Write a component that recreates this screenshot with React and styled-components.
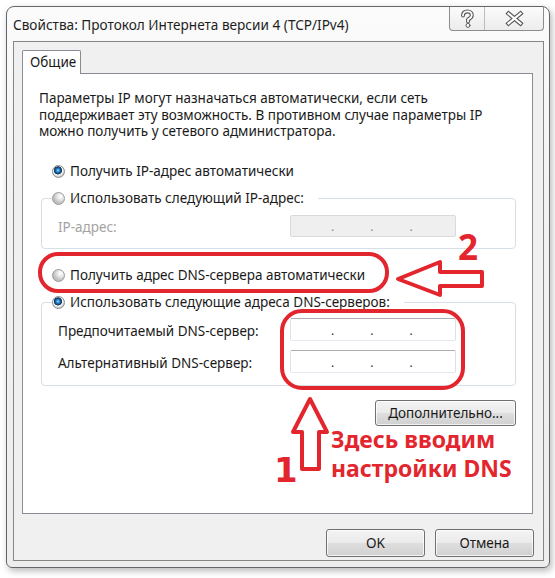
import React from "react";
import styled, { createGlobalStyle } from "styled-components";

const GlobalStyle = createGlobalStyle`
  html, body {
    margin: 0;
    padding: 0;
    background: #fff;
  }
  body {
    font-family: "Noto Sans", "DejaVu Sans", sans-serif;
    font-size: 13.5px;
    color: #1a1a1a;
    overflow: hidden;
  }
`;

const RED = "#e3262e";

const Page = styled.div`
  position: relative;
  width: 555px;
  height: 578px;
  box-sizing: border-box;
  padding: 6px 0 0 6px;
`;

const Window = styled.div`
  width: 544px;
  height: 562px;
  box-sizing: border-box;
  border: 1px solid #62666b;
  border-radius: 8px 8px 6px 6px;
  background: linear-gradient(180deg, #fbfbfb 0%, #f2f2f2 35%, #ededed 100%);
  box-shadow: 2px 3px 7px rgba(0, 0, 0, 0.28);
  display: flex;
  flex-direction: column;
`;

const TitleBar = styled.div`
  height: 34px;
  flex: none;
  display: flex;
  justify-content: space-between;
  align-items: flex-start;
  padding: 0 5px 0 6px;
`;

const Title = styled.div`
  font-size: 13.6px;
  line-height: 35px;
  color: #1e1e1e;
  white-space: nowrap;
`;

const CaptionGroup = styled.div`
  display: flex;
  height: 24px;
  box-sizing: border-box;
  border: 1px solid #8d8d8d;
  border-top: none;
  border-radius: 0 0 4px 4px;
  overflow: hidden;
  background: linear-gradient(180deg, #fbfbfb 0%, #ececec 100%);
`;

const CaptionButton = styled.div`
  width: ${(p) => p.$w}px;
  height: 100%;
  box-sizing: border-box;

  & + & {
    border-left: 1px solid #bdbdbd;
  }

  svg {
    display: block;
  }
`;

const Client = styled.div`
  flex: 1;
  min-height: 0;
  margin: 0 5px 6px 6px;
  border: 1px solid #868686;
  background: #f0f0f0;
  display: flex;
  flex-direction: column;
  padding: 8px 10px 3px 8px;
`;

const TabStrip = styled.div`
  display: flex;
  flex: none;
  position: relative;
  z-index: 1;
  margin-bottom: -1px;
`;

const Tab = styled.div`
  width: 59px;
  height: 24px;
  box-sizing: border-box;
  padding-left: 7px;
  border: 1px solid #898c95;
  border-bottom: none;
  border-radius: 2px 2px 0 0;
  background: #fff;
  line-height: 23px;
`;

const Panel = styled.div`
  flex: 1;
  min-height: 0;
  border: 1px solid #898c95;
  background: #fff;
  padding: 16px 16px 0 16px;
  display: flex;
  flex-direction: column;
`;

const Intro = styled.p`
  margin: 0;
  line-height: 16.5px;
  white-space: nowrap;
`;

const RadioRow = styled.label`
  display: flex;
  align-items: center;
  gap: 5px;
  height: 17px;
  margin: ${(p) => p.$mt || 0}px 0 0 ${(p) => (p.$inset ? 13 : 0)}px;
  white-space: nowrap;
`;

const RadioMark = styled.span`
  flex: none;
  width: 13px;
  height: 13px;
  box-sizing: border-box;
  border-radius: 50%;
  border: 1px solid ${(p) => (p.$checked ? "#8a8c8e" : "#979a9c")};
  background: ${(p) =>
    p.$checked
      ? "radial-gradient(circle at 45% 40%, #a6e6ff 0, #2a88cc 1.6px, #0e4e8c 3px, #1b3350 3.8px, #fdfdfd 4.4px, #f1f1f1 5px, #cfcfcf 6px)"
      : "radial-gradient(circle at 68% 30%, #ffffff 0, #eeeeee 2.5px, #d3d3d3 5px, #bdbdbd 7px)"};
`;

const Group = styled.fieldset`
  margin: ${(p) => p.$mt}px 0 0 2px;
  padding: ${(p) => p.$pad};
  border: 1px solid #d5dfe5;
  border-radius: 4px;
  min-inline-size: 0;
`;

const GroupLegend = styled.legend`
  padding: 0 14px 0 0;
  margin-left: -6px;
`;

const FieldGrid = styled.div`
  display: grid;
  grid-template-columns: 232px 166px;
  row-gap: 9px;
  align-items: center;
`;

const FieldLabel = styled.span`
  color: ${(p) => (p.$disabled ? "#a3a3a3" : "inherit")};
  padding-top: 3px;
  white-space: nowrap;
`;

const IpBox = styled.div`
  height: ${(p) => (p.$disabled ? 22 : 23)}px;
  box-sizing: border-box;
  border: 1px solid;
  border-color: ${(p) =>
    p.$disabled ? "#dadada" : "#abadb3 #dbdfe6 #e3e9ef #e2e3ea"};
  border-radius: 2px;
  background: ${(p) => (p.$disabled ? "#efefef" : "#fff")};
  display: flex;
  align-items: center;
  padding: 2px 0 0 40px;
  gap: 36px;
  color: ${(p) => (p.$disabled ? "#8a8a8a" : "#333")};
  font-size: 12px;
`;

const ActionRow = styled.div`
  display: flex;
  justify-content: flex-end;
  margin-top: ${(p) => p.$mt}px;
  flex: none;
`;

const Button = styled.button`
  width: ${(p) => p.$w}px;
  height: ${(p) => p.$h}px;
  padding: 0;
  font: inherit;
  color: #1a1a1a;
  border: 1px solid #707070;
  border-radius: 3px;
  background: linear-gradient(
    180deg,
    #f3f3f3 0%,
    #ebebeb 48%,
    #dedede 52%,
    #d0d0d0 100%
  );
  box-shadow: inset 0 0 0 1px rgba(255, 255, 255, 0.75);
`;

const Footer = styled.div`
  display: flex;
  justify-content: flex-end;
  gap: 10px;
  margin: 15px -1px 0 0;
  flex: none;
`;

const Overlay = styled.svg`
  position: absolute;
  left: 0;
  top: 0;
  pointer-events: none;
`;

const Note = styled.div`
  position: absolute;
  left: ${(p) => p.$x}px;
  top: ${(p) => p.$y}px;
  color: ${RED};
  font-family: ${(p) => p.$family || '"Noto Sans"'}, "DejaVu Sans", sans-serif;
  font-weight: 700;
  font-size: ${(p) => p.$size}px;
  line-height: ${(p) => p.$lh}px;
  white-space: nowrap;
  pointer-events: none;
`;

const Radio = ({ checked, inset, mt, children }) => (
  <RadioRow $inset={inset} $mt={mt}>
    <RadioMark $checked={checked} />
    {children}
  </RadioRow>
);

const IpField = ({ disabled }) => (
  <IpBox $disabled={disabled}>
    <span>.</span>
    <span>.</span>
    <span>.</span>
  </IpBox>
);

const HelpGlyph = () => (
  <svg width="34" height="23" viewBox="0 0 34 23">
    <g fill="none" strokeLinecap="round" strokeLinejoin="round">
      <path
        d="M13 8.5 C13 5.6 15 4.4 17.5 4.4 C20.2 4.4 21.8 6 21.8 8.2 C21.8 10.6 19.8 11.4 18 12.6 L18 14.6"
        stroke="#5a5a5a"
        strokeWidth="4"
      />
      <path
        d="M13 8.5 C13 5.6 15 4.4 17.5 4.4 C20.2 4.4 21.8 6 21.8 8.2 C21.8 10.6 19.8 11.4 18 12.6 L18 14.6"
        stroke="#fff"
        strokeWidth="1.8"
      />
      <circle cx="18" cy="18.4" r="2" fill="#fff" stroke="#5a5a5a" strokeWidth="1" />
    </g>
  </svg>
);

const CloseGlyph = () => (
  <svg width="59" height="23" viewBox="0 0 59 23">
    <g strokeLinecap="square">
      <path d="M23.5 6.5 L35.5 16.5 M35.5 6.5 L23.5 16.5" stroke="#5a5a5a" strokeWidth="4.4" />
      <path d="M23.5 6.5 L35.5 16.5 M35.5 6.5 L23.5 16.5" stroke="#fff" strokeWidth="2.2" />
    </g>
  </svg>
);

export default function App() {
  return (
    <Page>
      <GlobalStyle />
      <Window>
        <TitleBar>
          <Title>Свойства: Протокол Интернета версии 4 (TCP/IPv4)</Title>
          <CaptionGroup>
            <CaptionButton $w={34}>
              <HelpGlyph />
            </CaptionButton>
            <CaptionButton $w={59}>
              <CloseGlyph />
            </CaptionButton>
          </CaptionGroup>
        </TitleBar>

        <Client>
          <TabStrip>
            <Tab>Общие</Tab>
          </TabStrip>
          <Panel>
            <Intro>
              Параметры IP могут назначаться автоматически, если сеть
              <br />
              поддерживает эту возможность. В противном случае параметры IP
              <br />
              можно получить у сетевого администратора.
            </Intro>

            <Radio checked inset mt={23}>
              Получить IP-адрес автоматически
            </Radio>

            <Group $mt={10} $pad="8px 0 11px 16px">
              <GroupLegend>
                <Radio>Использовать следующий IP-адрес:</Radio>
              </GroupLegend>
              <FieldGrid>
                <FieldLabel $disabled>IP-адрес:</FieldLabel>
                <IpField disabled />
              </FieldGrid>
            </Group>

            <Radio inset mt={18}>
              Получить адрес DNS-сервера автоматически
            </Radio>

            <Group $mt={10} $pad="7px 0 12px 16px">
              <GroupLegend>
                <Radio checked>Использовать следующие адреса DNS-серверов:</Radio>
              </GroupLegend>
              <FieldGrid>
                <FieldLabel>Предпочитаемый DNS-сервер:</FieldLabel>
                <IpField />
                <FieldLabel>Альтернативный DNS-сервер:</FieldLabel>
                <IpField />
              </FieldGrid>
            </Group>

            <ActionRow $mt={14}>
              <Button $w={141} $h={26}>
                Дополнительно...
              </Button>
            </ActionRow>
          </Panel>

          <Footer>
            <Button $w={99} $h={28}>
              OK
            </Button>
            <Button $w={99} $h={28}>
              Отмена
            </Button>
          </Footer>
        </Client>
      </Window>

      <Overlay width="555" height="578" viewBox="0 0 555 578">
        <g fill="none" stroke={RED} strokeWidth="4" strokeLinejoin="round">
          <rect x="40" y="254" width="347" height="37" rx="18" />
          <rect x="282" y="311" width="181" height="77" rx="20" />
          <polygon points="398,279 440,262 440,272 482,272 482,286 440,286 440,295" />
          <polygon points="310,399 327,432 319,432 319,469 302,469 302,432 293,432" />
        </g>
      </Overlay>
      <Note $x={458} $y={229} $size={35} $lh={35}>
        2
      </Note>
      <Note $x={274} $y={453} $size={34} $lh={34} $family='"DejaVu Sans"'>
        1
      </Note>
      <Note $x={331} $y={425} $size={23} $lh={29}>
        Здесь вводим
        <br />
        настройки DNS
      </Note>
    </Page>
  );
}
